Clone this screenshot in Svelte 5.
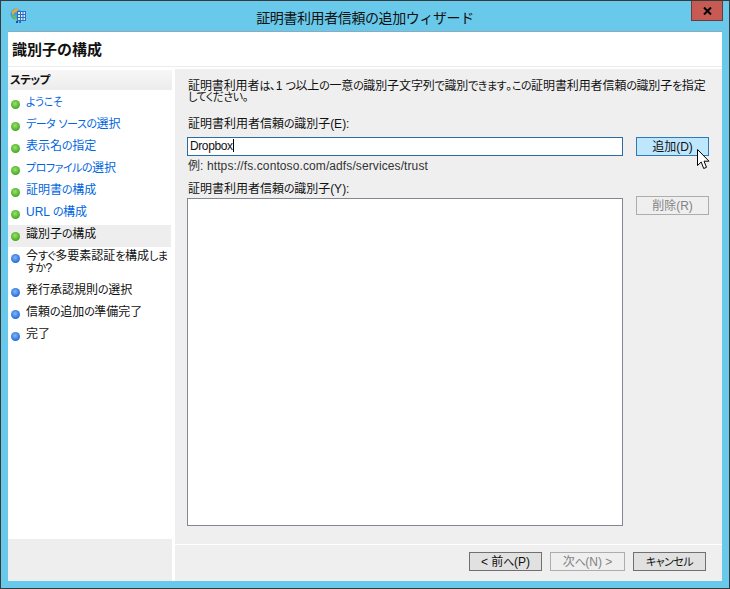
<script>
  const steps = [
    { label: 'ようこそ', state: 'done' },
    { label: 'データ ソースの選択', state: 'done' },
    { label: '表示名の指定', state: 'done' },
    { label: 'プロファイルの選択', state: 'done' },
    { label: '証明書の構成', state: 'done' },
    { label: 'URL の構成', state: 'done' },
    { label: '識別子の構成', state: 'current' },
    { label: '今すぐ多要素認証を構成しますか?', state: 'todo' },
    { label: '発行承認規則の選択', state: 'todo' },
    { label: '信頼の追加の準備完了', state: 'todo' },
    { label: '完了', state: 'todo' }
  ];

  // the original UI font draws kana narrower than kanji
  function parts(text) {
    return text.split(/([ぁ-んァ-ヶー]+)/).filter(Boolean).map((t) => ({
      t,
      kana: /^[ぁ-んァ-ヶー]/.test(t)
    }));
  }
</script>

{#snippet jp(text)}
  {#each parts(text) as p}{#if p.kana}<span class="kana">{p.t}</span>{:else}{p.t}{/if}{/each}
{/snippet}

<div class="window">
  <div class="titlebar">
    <svg class="app-icon" width="17" height="17" viewBox="0 0 17 17">
      <circle cx="6" cy="7" r="5.5" fill="#3f9fd8" />
      <path d="M1.5 5 Q4 1 8.5 1.5 L8 4 L4 6 L3 9 Z" fill="#e8a93a" />
      <path d="M2 9 L5 8 L7 12 L5 12.5 Z" fill="#6fbf4a" />
      <rect x="7.5" y="4.5" width="8" height="9" fill="#dcecfb" stroke="#2a6fc0" />
      <path d="M8 7.5h7M8 10.5h7M10.5 5v8M13 5v8" stroke="#2a6fc0" stroke-width="1" />
      <rect x="6" y="14" width="2" height="2" fill="#1c4f9c" />
      <rect x="9" y="14" width="2" height="2" fill="#2a6fc0" />
    </svg>
    <div class="title">証明書利用者信頼の追加ウィザード</div>
    <div class="close">
      <svg width="9" height="8" viewBox="0 0 9 8"><path d="M1 0.5 L8 7.5 M8 0.5 L1 7.5" stroke="#000" stroke-width="2" /></svg>
    </div>
  </div>

  <div class="content">
    <div class="header">識別子の構成</div>
    <div class="main">
      <aside class="sidebar">
        <div class="steps">
          <div class="steps-head">{@render jp('ステップ')}</div>
          <ul>
            {#each steps as step}
              <li class={step.state}>
                <span class="dot"></span>
                <span class="label">{@render jp(step.label)}</span>
              </li>
            {/each}
          </ul>
        </div>
      </aside>

      <section class="panel">
        <div class="form">
          <p class="intro">{@render jp('証明書利用者は、1 つ以上の一意の識別子文字列で識別できます。この証明書利用者信頼の識別子を指定')}<br />{@render jp('してください。')}</p>
          <div class="label-row">{@render jp('証明書利用者信頼の識別子(E):')}</div>
          <div class="row">
            <div class="input">Dropbox<span class="caret"></span></div>
            <button class="btn hot">追加(D)</button>
          </div>
          <div class="hint">例: https://fs.contoso.com/adfs/services/trust</div>
          <div class="label-row second">{@render jp('証明書利用者信頼の識別子(Y):')}</div>
          <div class="row list-row">
            <div class="listbox"></div>
            <button class="btn off">削除(R)</button>
          </div>
        </div>
        <div class="footer">
          <button class="btn nav">&lt; 前{@render jp('へ')}(P)</button>
          <button class="btn nav off">次{@render jp('へ')}(N) &gt;</button>
          <button class="btn nav cancel">{@render jp('キャンセル')}</button>
        </div>
      </section>
    </div>
  </div>

  <svg class="cursor" width="13" height="21" viewBox="0 0 13 21">
    <path d="M0.5 0.5 V16.5 L4.2 13 L6.7 19.5 L9.5 18.3 L7 12.2 H12 Z" fill="#fff" stroke="#000" stroke-width="1" />
  </svg>
</div>

<style>
  :global(body) { margin: 0; }

  .window {
    position: relative;
    width: 730px;
    height: 589px;
    box-sizing: border-box;
    display: flex;
    flex-direction: column;
    background: #69c9ea;
    border: 1px solid #383b3e;
    font-family: "Liberation Sans", "Noto Sans CJK JP", sans-serif;
    font-feature-settings: "palt";
    font-size: 12px;
    color: #111;
    overflow: hidden;
  }
  .kana { font-size: 11px; letter-spacing: -0.5px; }

  .titlebar {
    position: relative;
    height: 30px;
    flex: none;
    display: flex;
    align-items: center;
    justify-content: center;
  }
  .app-icon { position: absolute; left: 9px; top: 6px; }
  .title { font-size: 14px; color: #111; margin-top: 1px; font-feature-settings: "palt" 0; letter-spacing: -0.4px; }
  .close {
    position: absolute;
    right: 6px;
    top: -1px;
    width: 32px;
    height: 21px;
    box-sizing: border-box;
    background: #c75a52;
    border: 1px solid #6b3a3a;
    display: flex;
    align-items: center;
    justify-content: center;
  }

  .content {
    flex: 1;
    min-height: 0;
    margin: 0 7px 7px;
    display: flex;
    flex-direction: column;
    background: #fff;
    border-top: 1px solid #8fa9b8;
  }
  .header {
    height: 35px;
    flex: none;
    box-sizing: border-box;
    padding: 0 4px 2px;
    display: flex;
    align-items: center;
    font-size: 15px;
    font-weight: 700;
    font-feature-settings: "palt" 0;
    border-bottom: 1px solid #ececec;
  }

  .main { flex: 1; min-height: 0; display: flex; padding-top: 2px; }

  .sidebar {
    width: 164px;
    flex: none;
    display: flex;
    flex-direction: column;
    background: #eee;
    border-right: 2px solid #fff;
    box-sizing: content-box;
  }
  .steps { height: 470px; background: #fff; padding-top: 1px; box-sizing: border-box; }
  .steps-head {
    height: 20px;
    padding-left: 2px;
    font-weight: 700;
    line-height: 20px;
    background: linear-gradient(#f7f7f7, #ececec);
  }
  .steps-head :global(.kana) { font-size: 11.5px; }
  ul { list-style: none; margin: 3px 0 0; padding: 0; }
  li {
    display: flex;
    align-items: flex-start;
    padding: 3px 2px 5px 3px;
    min-height: 22px;
    box-sizing: border-box;
    line-height: 12px;
    margin-right: 1px;
  }
  li.done .label { color: #0066e0; }
  li.current { background: #eee; }
  li.todo .label { color: #111; }
  li:nth-child(8) { min-height: 34px; padding-bottom: 2px; }
  .dot {
    flex: none;
    width: 9px;
    height: 9px;
    margin: 4px 6px 0 0;
    border-radius: 50%;
    background: radial-gradient(circle at 45% 40%, #9be26a, #3fa51f 75%);
  }
  li.todo .dot { background: radial-gradient(circle at 45% 40%, #7fb8f5, #1f66d8 75%); }

  .panel {
    flex: 1;
    min-width: 0;
    display: flex;
    flex-direction: column;
    background: #efefef;
    margin-left: 1px;
  }
  .form { flex: 1; min-height: 0; padding: 10px 13px 0 13px; display: flex; flex-direction: column; }
  .intro { margin: 2px 0 0; line-height: 11px; height: 36px; white-space: nowrap; letter-spacing: -0.1px; }
  .label-row { height: 20px; line-height: 14px; }
  .label-row.second { height: 16px; }
  .row { display: flex; gap: 13px; align-items: flex-start; margin-left: -1px; }
  .input {
    flex: 1;
    height: 19px;
    box-sizing: border-box;
    border: 1px solid #2d6a9f;
    background: #fff;
    padding-left: 2px;
    line-height: 16px;
    letter-spacing: -0.4px;
  }
  .caret { display: inline-block; width: 1px; height: 13px; background: #000; vertical-align: -2px; }
  .hint { height: 26px; line-height: 20px; color: #333; letter-spacing: 0.1px; }
  .list-row { height: 328px; }
  .listbox { flex: 1; height: 100%; box-sizing: border-box; border: 1px solid #828790; background: #fff; }

  .btn {
    width: 73px;
    height: 19px;
    box-sizing: border-box;
    flex: none;
    padding: 1px 0 0;
    font: inherit;
    line-height: 15px;
    color: #111;
    background: #e1e1e1;
    border: 1px solid #707070;
    border-radius: 0;
  }
  .btn.hot { background: #bee6fd; border-color: #2f7ab5; }
  .btn.off { background: #efefef; border-color: #adadad; color: #838383; }
  .list-row .btn { margin-top: -2px; }

  .footer {
    height: 37px;
    flex: none;
    box-sizing: border-box;
    border-top: 1px solid #fff;
    padding: 7px 16px 0 0;
    display: flex;
    justify-content: flex-end;
    gap: 8px;
  }
  .btn.nav.off { width: 75px; }
  .cursor { position: absolute; left: 696px; top: 148px; }
</style>
